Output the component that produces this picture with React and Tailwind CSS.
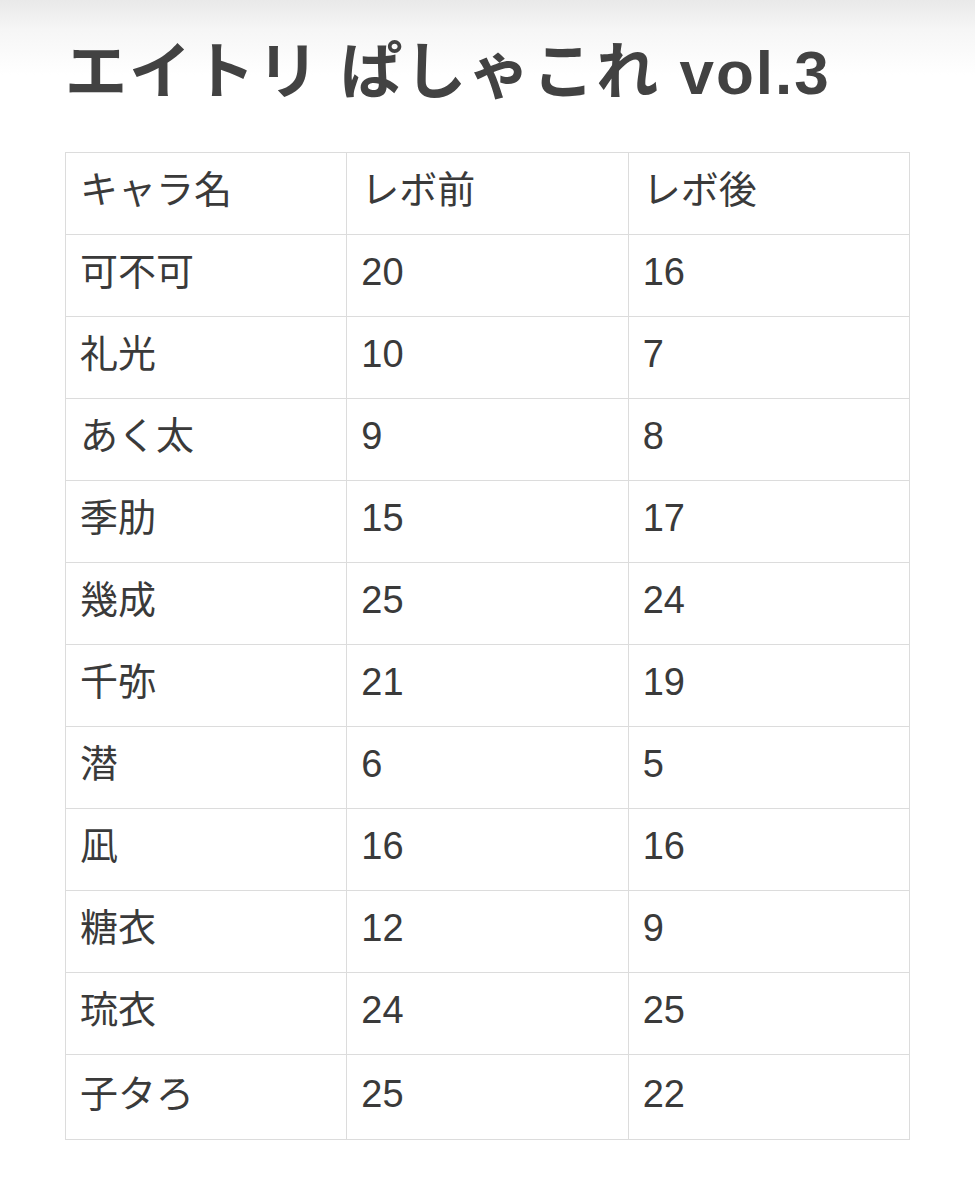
const rows = [
    ['可不可', '20', '16'],
    ['礼光', '10', '7'],
    ['あく太', '9', '8'],
    ['季肋', '15', '17'],
    ['幾成', '25', '24'],
    ['千弥', '21', '19'],
    ['潜', '6', '5'],
    ['凪', '16', '16'],
    ['糖衣', '12', '9'],
    ['琉衣', '24', '25'],
    ['子タろ', '25', '22'],
];

const font = {fontFamily: '"Liberation Sans", "Noto Sans CJK JP", sans-serif'};

export default function App() {
    return (
        <div
            className="min-h-[1200px] w-[975px] bg-white bg-[linear-gradient(to_bottom,#e9e9e9_0px,#f6f6f6_30px,#ffffff_75px)] text-[#3a3a3a]"
            style={font}
        >
            <div className="px-[65px] pt-[42px]">
                <h1 className="text-[62px] font-bold leading-none tracking-[2px] text-[#424242]">
                    エイトリ ぱしゃこれ vol.3
                </h1>

                <table className="mt-[48px] w-[845px] table-fixed border-collapse">
                    <thead>
                        <tr className="h-[82px]">
                            <th className="border border-[#dcdcdc] px-[14px] pb-[6px] text-left align-middle text-[38px] font-normal">キャラ名</th>
                            <th className="border border-[#dcdcdc] px-[14px] pb-[6px] text-left align-middle text-[38px] font-normal">レボ前</th>
                            <th className="border border-[#dcdcdc] px-[14px] pb-[6px] text-left align-middle text-[38px] font-normal">レボ後</th>
                        </tr>
                    </thead>
                    <tbody>
                        {rows.map((r, i) => (
                            <tr key={i} className={i === rows.length - 1 ? 'h-[85px]' : 'h-[82px]'}>
                                {r.map((c, j) => (
                                    <td key={j} className="border border-[#dcdcdc] px-[14px] pb-[6px] align-middle text-[38px]">
                                        {c}
                                    </td>
                                ))}
                            </tr>
                        ))}
                    </tbody>
                </table>
            </div>
        </div>
    )
}
